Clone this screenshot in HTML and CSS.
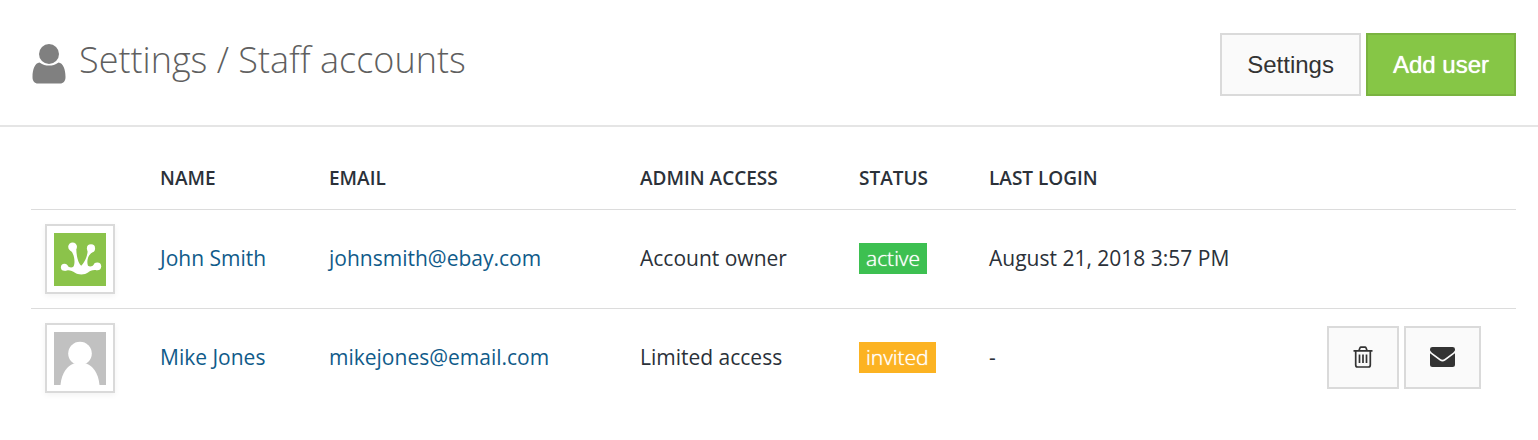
FILE: index.html
```html
<!DOCTYPE html>
<html lang="en">
<head>
    <meta charset="UTF-8">
    <meta name="viewport" content="width=device-width, initial-scale=1.0">
    <title>Settings / Staff accounts</title>
    <link rel="stylesheet" href="styles.css">
</head>
<body>

    <header class="page-header">
        <div class="page-title">
            <svg class="title-icon" viewBox="0 0 34 40" aria-hidden="true">
                <circle cx="17" cy="10" r="10"/>
                <path d="M7.500 18.500C11 21 13.500 21.500 17 21.500S23 21 26.500 18.500C31 19 33.500 25 33.500 33C33.500 37 31.500 39.500 28 39.500H6C2.500 39.500 0.500 37 0.500 33C0.500 25 3 19 7.500 18.500Z"/>
            </svg>
            <h1>Settings / Staff accounts</h1>
        </div>
        <div class="buttons">
            <button class="btn" type="button">Settings</button>
            <button class="btn btn-primary" type="button">Add user</button>
        </div>
    </header>

    <main class="content">
        <table class="staff">
            <colgroup>
                <col class="col-avatar">
                <col class="col-name">
                <col class="col-email">
                <col class="col-access">
                <col class="col-status">
                <col class="col-login">
                <col>
            </colgroup>
            <thead>
                <tr>
                    <th></th>
                    <th>NAME</th>
                    <th>EMAIL</th>
                    <th>ADMIN ACCESS</th>
                    <th>STATUS</th>
                    <th>LAST LOGIN</th>
                    <th></th>
                </tr>
            </thead>
            <tbody>
                <tr>
                    <td class="photo">
                        <div class="avatar">
                            <svg viewBox="0 0 52 53" aria-hidden="true">
                                <rect width="52" height="53" fill="#8bc34a"/>
                                <g fill="#fff">
                                    <circle cx="18.600" cy="13.800" r="4.400"/>
                                    <circle cx="37" cy="15.400" r="4.100"/>
                                    <circle cx="10.400" cy="34.200" r="3.500"/>
                                    <circle cx="43.300" cy="33.300" r="3.900"/>
                                    <path d="M16 17.300C20.500 20 21.500 30 19.500 33.500C17.500 35.300 14.500 34.500 12.500 31.500L10.500 37.700C15 36.500 18 37.500 21 39.700C24 42 31 42 34 39.500C36 37.800 39 36.300 43 37.200L41 30.300C39 33.500 36 34.500 34 32.800C32.500 29 33.500 22 38.500 19.200L33.700 17.500C33.500 24 29.500 31 27.200 32.800C25 31 22.500 25 22.300 16.300Z"/>
                                </g>
                            </svg>
                        </div>
                    </td>
                    <td><a href="#">John Smith</a></td>
                    <td><a href="#">johnsmith@ebay.com</a></td>
                    <td>Account owner</td>
                    <td><span class="label label-active">active</span></td>
                    <td>August 21, 2018 3:57 PM</td>
                    <td></td>
                </tr>
                <tr>
                    <td class="photo">
                        <div class="avatar">
                            <svg viewBox="0 0 52 53" aria-hidden="true">
                                <rect width="52" height="53" fill="#c1c1c1"/>
                                <circle cx="26" cy="21.500" r="11.800" fill="#fff"/>
                                <path d="M6.500 53C7.500 41 13.500 33.500 20 31.500H32C38.500 33.500 44.500 41 45.500 53Z" fill="#fff"/>
                            </svg>
                        </div>
                    </td>
                    <td><a href="#">Mike Jones</a></td>
                    <td><a href="#">mikejones@email.com</a></td>
                    <td>Limited access</td>
                    <td><span class="label label-invited">invited</span></td>
                    <td>-</td>
                    <td class="actions">
                        <div class="buttons">
                            <button class="btn" type="button" aria-label="Delete">
                                <svg class="icon-trash" viewBox="0 0 20 22" fill="none" stroke="#333" stroke-width="1.700" aria-hidden="true">
                                    <path d="M0.500 4.800H19.500M6 4.500L7 1.800Q7.300 1.200 8 1.200H12Q12.700 1.200 13 1.800L14 4.500M2.700 5V19Q2.700 21 4.500 21H15.500Q17.300 21 17.300 19V5M6.500 8.500V17M10 8.500V17M13.500 8.500V17"/>
                                </svg>
                            </button>
                            <button class="btn" type="button" aria-label="Send email">
                                <svg class="icon-mail" viewBox="0 0 25 20" fill="#333" aria-hidden="true">
                                    <path d="M2.500 0H22.500Q25 0 25 2.300C25 4 24 5 23 5.800L14.500 12Q12.500 13.300 10.500 12L2 5.800C1 5 0 4 0 2.300Q0 0 2.500 0Z"/>
                                    <path d="M0 6.200L9.700 13.400Q12.500 15.600 15.300 13.400L25 6.200V17.500Q25 20 22.500 20H2.500Q0 20 0 17.500Z"/>
                                </svg>
                            </button>
                        </div>
                    </td>
                </tr>
            </tbody>
        </table>
    </main>

</body>
</html>
```
FILE: styles.css
```css
* {
    box-sizing: border-box;
}
body {
    margin: 0;
    font-family: "Open Sans", sans-serif;
    font-size: 21px;
    line-height: 31px;
    color: #2b3139;
    background-color: #fff;
}
.page-header {
    display: flex;
    justify-content: space-between;
    align-items: flex-start;
    padding: 33px 22px 29px 32px;
    border-bottom: 2px solid #e5e5e5;
}
.page-title {
    display: flex;
    align-items: center;
    gap: 13px;
}
.title-icon {
    width: 34px;
    height: 40px;
    margin-top: 8px;
    fill: #808080;
}
h1 {
    margin: 0;
    font-size: 36px;
    font-weight: 300;
    line-height: 54px;
    color: #5f5f5f;
}
.buttons {
    display: flex;
    gap: 5px;
}
.btn {
    display: flex;
    align-items: center;
    height: 63px;
    padding: 0 25px;
    border: 2px solid #dadada;
    background-color: #fafafa;
    font-family: "Liberation Sans", Arial, sans-serif;
    font-size: 24px;
    color: #333;
    cursor: pointer;
}
.btn:hover {
    background-color: #f0f0f0;
}
.btn-primary {
    border-color: #7ab340;
    background-color: #86c646;
    color: #fff;
    text-shadow: 0 0 1px #fff;
}
.btn-primary:hover {
    background-color: #7ab340;
}
.content {
    padding: 20px 22px 30px 31px;
}
.staff {
    width: 100%;
    table-layout: fixed;
    border-collapse: collapse;
}
.staff th, .staff td {
    padding: 12px 14px 14px;
    text-align: left;
    white-space: nowrap;
}
.staff th {
    padding: 16px 14px 15px;
    font-size: 19px;
    font-weight: 600;
}
.staff td {
    border-top: 1px solid #dcdcdc;
}
.staff .photo {
    padding: 14px;
}
.col-avatar {
    width: 115px;
}
.col-name {
    width: 169px;
}
.col-email {
    width: 311px;
}
.col-access {
    width: 219px;
}
.col-status {
    width: 130px;
}
.col-login {
    width: 300px;
}
.staff a {
    color: #105b8a;
    text-decoration: none;
}
.staff a:hover {
    text-decoration: underline;
}
.avatar {
    width: 70px;
    height: 70px;
    padding: 7px;
    border: 2px solid #dadada;
    box-shadow: 0 2px 6px rgba(0, 0, 0, 0.05);
}
.avatar svg {
    display: block;
    width: 52px;
    height: 53px;
}
.label {
    display: inline-block;
    padding: 0 7px;
    font-weight: 300;
    color: #fff;
    text-shadow: 0 0 1px #fff;
}
.label-active {
    background-color: #3dc051;
}
.label-invited {
    background-color: #fcb322;
}
.staff .actions {
    padding: 0 35px 2px 0;
}
.actions .buttons {
    justify-content: flex-end;
}
.actions .btn {
    padding: 0 24px;
}
.icon-trash {
    width: 20px;
    height: 22px;
}
.icon-mail {
    width: 25px;
    height: 20px;
}
```
